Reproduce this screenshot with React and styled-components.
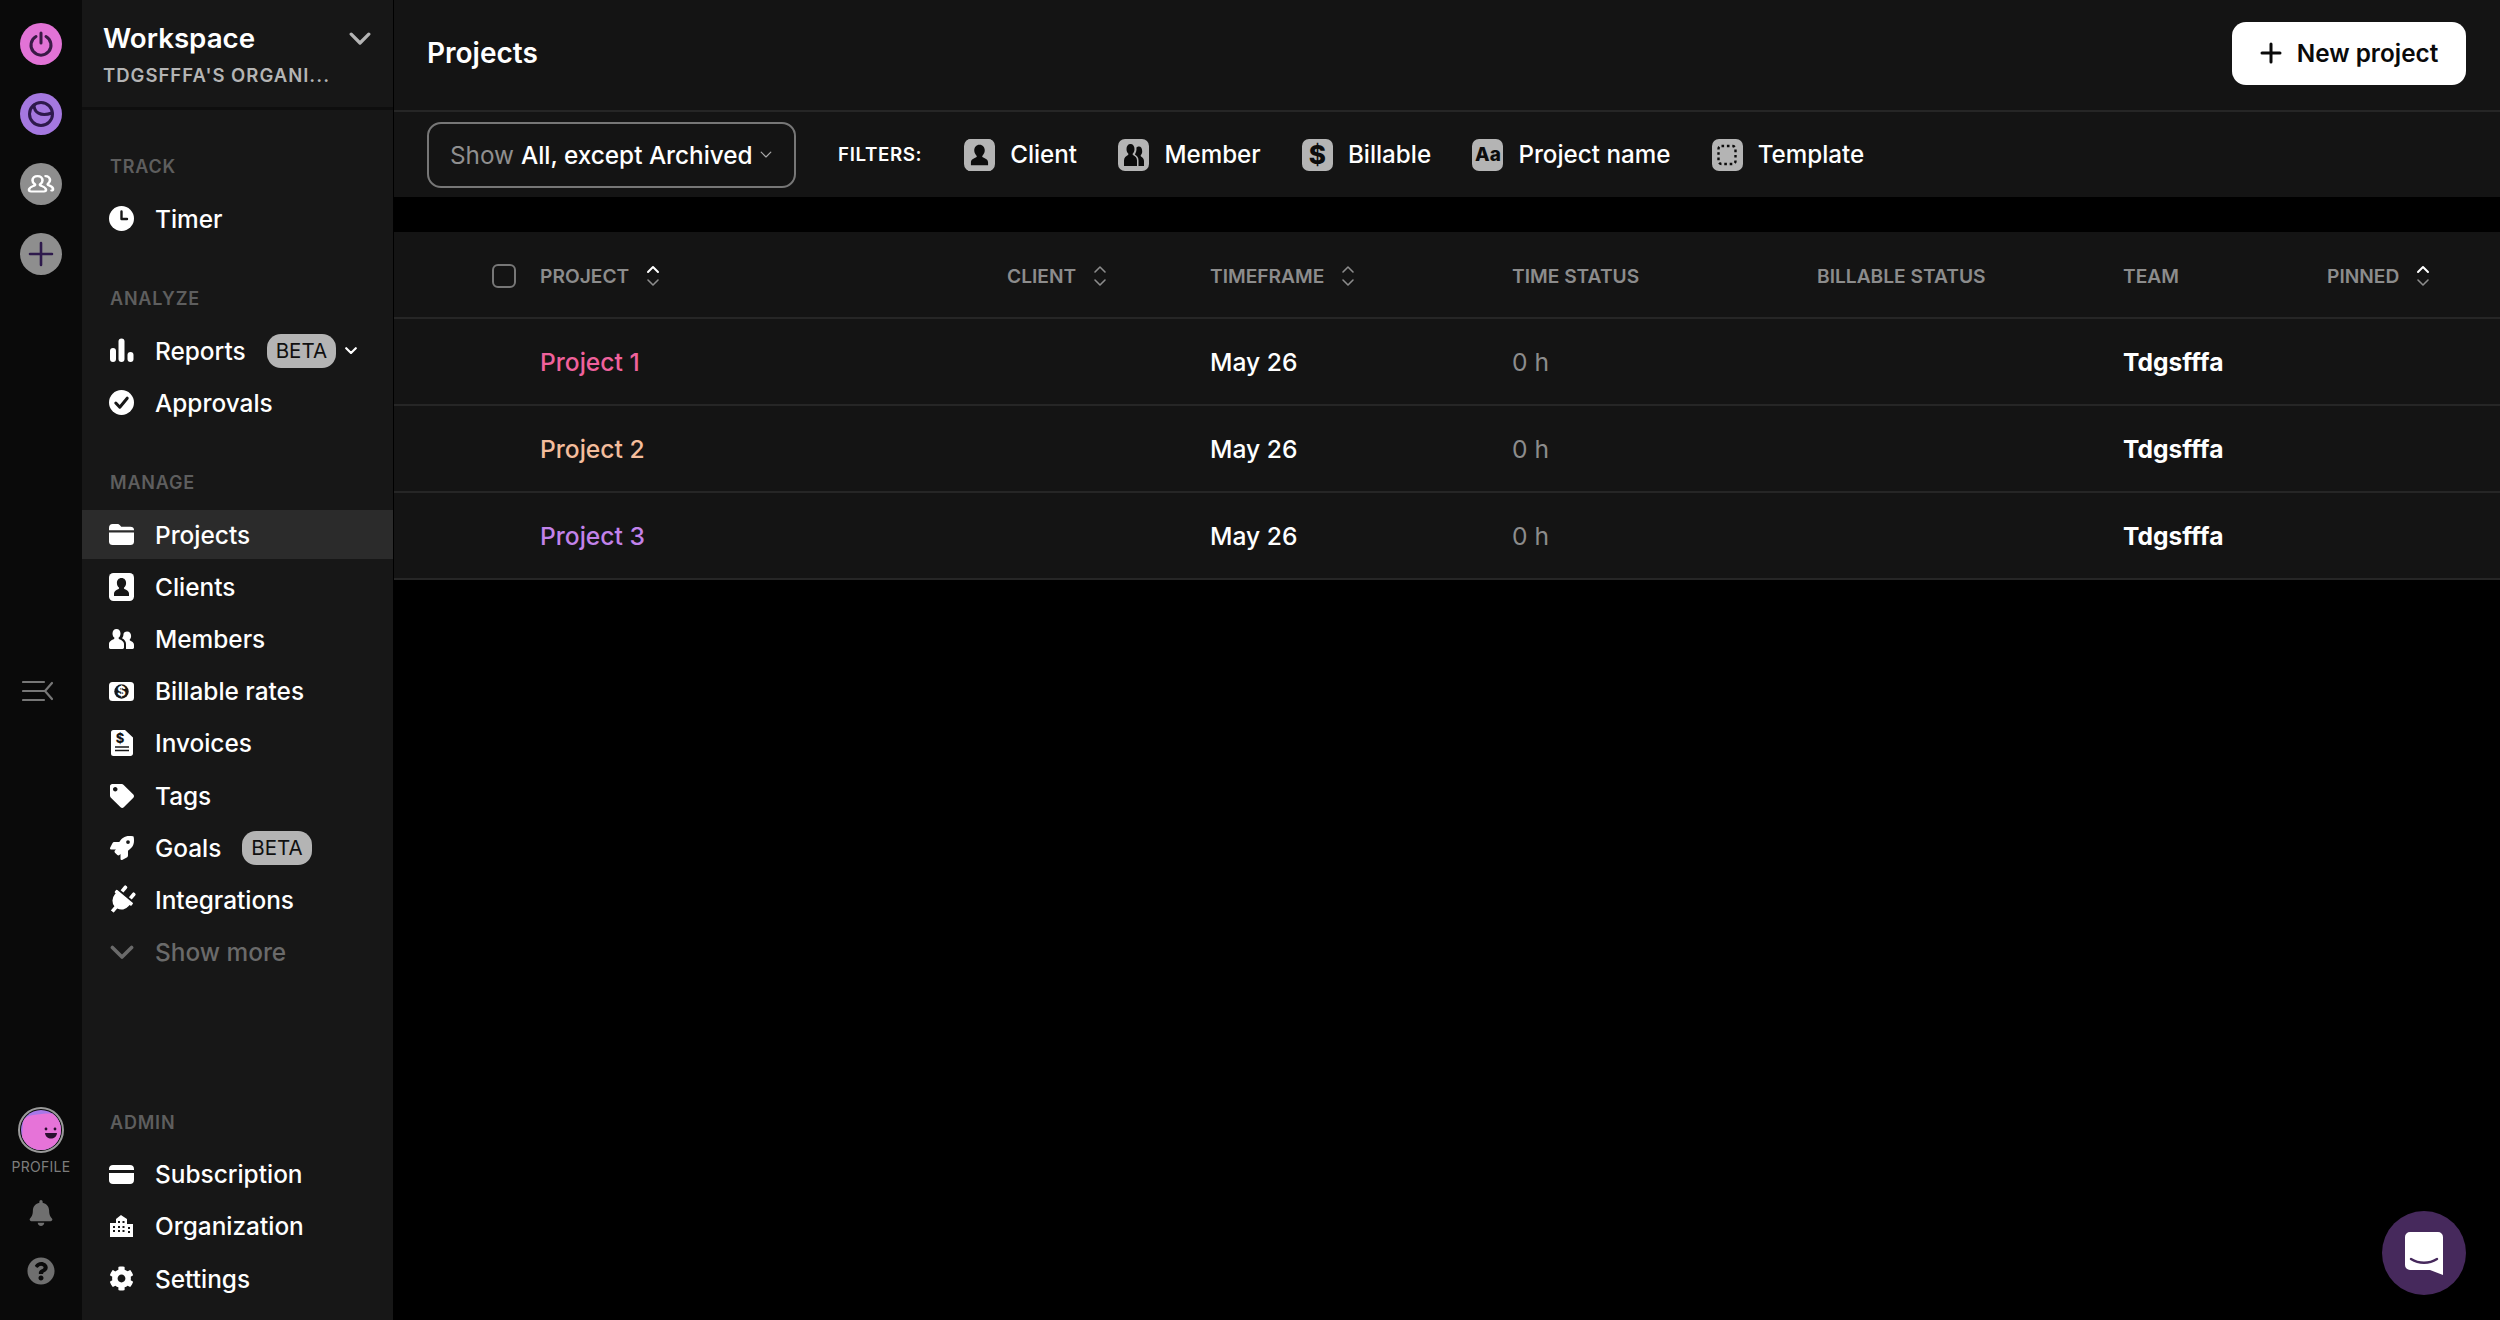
import styled, { createGlobalStyle } from 'styled-components';
import { FaBell, FaCog, FaPlug, FaQuestionCircle, FaRocket, FaTag } from 'react-icons/fa';

const GlobalStyle = createGlobalStyle`
  html, body {
    margin: 0;
    height: 100%;
    background: #000;
  }
  body, button {
    font-family: Inter, "Noto Sans", "Liberation Sans", sans-serif;
  }
  * {
    box-sizing: border-box;
  }
`;

const Clock = () => (
  <svg width="25" height="25" viewBox="0 0 25 25">
    <circle cx="12.5" cy="12.5" r="12.5" fill="currentColor" />
    <path d="M12.5 5.5v7.5h5.5" fill="none" stroke="#171717" strokeWidth="2.4" strokeLinecap="round" strokeLinejoin="round" />
  </svg>
);

const Bars = () => (
  <svg width="25" height="25" viewBox="0 0 25 25" fill="currentColor">
    <rect x="1" y="10" width="6" height="14" rx="3" />
    <rect x="9.5" y="0.5" width="6" height="23.5" rx="3" />
    <rect x="18.5" y="14" width="6" height="10" rx="3" />
  </svg>
);

const CheckCircle = () => (
  <svg width="25" height="25" viewBox="0 0 25 25">
    <circle cx="12.5" cy="12.5" r="12.5" fill="currentColor" />
    <path d="M6.8 13l4 4.2 7.4-9" fill="none" stroke="#171717" strokeWidth="3" strokeLinecap="round" strokeLinejoin="round" />
  </svg>
);

const Folder = () => (
  <svg width="25" height="21" viewBox="0 0 25 21" fill="currentColor">
    <path d="M0 4c0-2.4 1.4-4 3.6-4h4.6c1.6 0 2.2.6 3.2 1.8l.8 1h9.2c2.2 0 3.6 1 3.6 3v.4H0z" />
    <path d="M0 8.4h25v9c0 2.2-1.4 3.6-3.6 3.6H3.6C1.4 21 0 19.6 0 17.4z" />
  </svg>
);

const Portrait = ({ size = 25, height = 28, ink = '#171717' }) => (
  <svg width={size} height={height} viewBox="0 0 25 28">
    <rect width="25" height="28" rx="4.5" fill="currentColor" />
    <path d="M12.5 5c-2.9 0-4.6 2.2-4.6 4.9 0 2 .9 3.6 2 4.7.4.5.3 1-.3 1.4C7.3 17.2 5 18 5 20.5V23h15v-2.5c0-2.5-2.3-3.3-4.6-4.5-.6-.4-.7-.9-.3-1.4 1.1-1.1 2-2.7 2-4.7C17.1 7.2 15.4 5 12.5 5z" fill={ink} />
  </svg>
);

const People = () => (
  <svg width="25" height="20" viewBox="0 0 25 20" fill="currentColor">
    <path d="M7.5 0C5 0 3.5 2 3.5 4.4c0 1.8.8 3.3 1.7 4.2.4.5.3 1-.2 1.3C2.9 11 0 12.2 0 15v3.6c0 .8.6 1.4 1.4 1.4h12.2c.8 0 1.4-.6 1.4-1.4V15c0-2.8-2.9-4-5-5.1-.5-.3-.6-.8-.2-1.3.9-.9 1.7-2.4 1.7-4.2C11.5 2 10 0 7.5 0z" />
    <path d="M18 2.5c-1.500 0-2.900.8-3.500 2.200.1 2-.8 3.700-1.500 4.600 2.600 1.300 4 3.200 4 5.700V20h6.600c.8 0 1.400-.6 1.400-1.400v-2.800c0-2.300-2.400-3.300-4-4.200-.5-.3-.5-.7-.2-1.100.8-.8 1.300-2 1.300-3.500 0-2.500-1.500-4.500-4.100-4.500z" />
  </svg>
);

const Money = () => (
  <svg width="25" height="19" viewBox="0 0 25 19">
    <rect width="25" height="19" rx="3.5" fill="currentColor" />
    <circle cx="12.5" cy="9.5" r="7.2" fill="#171717" />
    <text x="12.5" y="14.2" fontSize="13" fontWeight="700" textAnchor="middle" fill="#fff" fontFamily="Inter, sans-serif">$</text>
  </svg>
);

const Invoice = () => (
  <svg width="22" height="26" viewBox="0 0 22 26">
    <path d="M2.5 0H14l8 7.5v16c0 1.4-1.1 2.5-2.5 2.5h-17A2.5 2.5 0 0 1 0 23.5v-21A2.5 2.5 0 0 1 2.5 0z" fill="currentColor" />
    <text x="9" y="13" fontSize="13" fontWeight="800" textAnchor="middle" fill="#171717" fontFamily="Inter, sans-serif">$</text>
    <path d="M4 17h14M4 20.5h14" stroke="#171717" strokeWidth="1.6" />
  </svg>
);

const Card = () => (
  <svg width="25" height="19" viewBox="0 0 25 19" fill="currentColor">
    <path d="M0 4c0-2.5 1.5-4 4-4h17c2.5 0 4 1.5 4 4v1H0z" />
    <path d="M0 8h25v7c0 2.5-1.5 4-4 4H4c-2.5 0-4-1.5-4-4z" />
  </svg>
);

const Building = () => (
  <svg width="23" height="22" viewBox="0 0 23 22">
    <path d="M0 8h6V4l5-4 1 .8L17 4v5h6v13H0z" fill="currentColor" />
    <path d="M3 11h2v2H3zM3 15h2v2H3zM8 6h2v2H8zM12.5 6h2v2h-2zM8 11h2v2H8zM12.5 11h2v2h-2zM8 15h2v2H8zM12.5 15h2v2h-2zM18 12h2v2h-2zM18 16h2v2h-2z" fill="#171717" />
  </svg>
);

const Chevron = ({ size = 20, stroke = 3 }) => (
  <svg width={size} height={size * 0.6} viewBox="0 0 20 12" fill="none" stroke="currentColor" strokeWidth={stroke} strokeLinecap="round" strokeLinejoin="round">
    <path d="M2 2l8 8 8-8" />
  </svg>
);

const Sort = ({ up }) => (
  <SortIcon viewBox="0 0 14 24" fill="none" strokeLinecap="round" strokeLinejoin="round">
    <path d="M2 8l5-5 5 5" stroke={up ? '#fff' : '#8c8c8c'} strokeWidth={up ? 2 : 1.6} />
    <path d="M2 16l5 5 5-5" stroke="#8c8c8c" strokeWidth="1.6" />
  </SortIcon>
);

const ClientFilter = () => (
  <FilterGlyph>
    <Portrait size={31} height={32} ink="#0c0c0c" />
  </FilterGlyph>
);

const MemberFilter = () => (
  <FilterGlyph>
    <svg width="22" height="24" viewBox="0 0 22 24" fill="#0c0c0c">
      <path d="M7.5 1C5 1 3.5 3 3.5 6c0 2 .7 3.5 1.7 4.6.4.5.3 1-.2 1.4C3 13.4 1 14.4 1 17.5V23h13v-5.500c0-3.100-2-4.100-4-5.500-.5-.4-.6-.9-.2-1.400 1-1.100 1.700-2.600 1.700-4.600C11.500 3 10 1 7.500 1z" />
      <path d="M16 3.500c-1 0-2 .4-2.600 1.100.4 2.400-.3 5-1.500 6.900 2.400 1.500 3.600 3.200 3.600 6V23H21v-5c0-2.500-1.500-3.500-3-4.600-.5-.4-.5-.8-.1-1.300.8-1 1.300-2.200 1.300-3.900 0-2.800-1.300-4.700-3.200-4.700z" />
    </svg>
  </FilterGlyph>
);

const BillableFilter = () => <FilterGlyph>$</FilterGlyph>;

const NameFilter = () => <FilterGlyph $small>Aa</FilterGlyph>;

const TemplateFilter = () => (
  <FilterGlyph>
    <svg width="22" height="24" viewBox="0 0 22 24" fill="none" stroke="#0c0c0c" strokeWidth="2.4" strokeDasharray="2.6 2.8">
      <rect x="2.5" y="3" width="17" height="18" rx="3" />
    </svg>
  </FilterGlyph>
);

const Plug = () => <TiltedPlug size={29} />;

const tracks = [{ label: 'Timer', icon: <Clock /> }];
const analyze = [
  { label: 'Reports', icon: <Bars />, beta: true, caret: true },
  { label: 'Approvals', icon: <CheckCircle /> },
];
const manage = [
  { label: 'Projects', icon: <Folder />, active: true },
  { label: 'Clients', icon: <Portrait /> },
  { label: 'Members', icon: <People /> },
  { label: 'Billable rates', icon: <Money /> },
  { label: 'Invoices', icon: <Invoice /> },
  { label: 'Tags', icon: <FaTag size={24} /> },
  { label: 'Goals', icon: <FaRocket size={24} />, beta: true },
  { label: 'Integrations', icon: <Plug /> },
  { label: 'Show more', icon: <Chevron size={24} />, muted: true },
];
const admin = [
  { label: 'Subscription', icon: <Card /> },
  { label: 'Organization', icon: <Building /> },
  { label: 'Settings', icon: <FaCog size={25} /> },
];

const filters = [
  { label: 'Client', icon: <ClientFilter /> },
  { label: 'Member', icon: <MemberFilter /> },
  { label: 'Billable', icon: <BillableFilter /> },
  { label: 'Project name', icon: <NameFilter /> },
  { label: 'Template', icon: <TemplateFilter /> },
];

const columns = [
  { label: 'Project', sort: 'up' },
  { label: 'Client', sort: 'both' },
  { label: 'Timeframe', sort: 'both' },
  { label: 'Time status' },
  { label: 'Billable status' },
  { label: 'Team' },
  { label: 'Pinned', sort: 'up' },
];

const projects = [
  { name: 'Project 1', color: '#f0619c' },
  { name: 'Project 2', color: '#f4bd9c' },
  { name: 'Project 3', color: '#c282ea' },
];

function NavList({ items }) {
  return (
    <NavItems>
      {items.map((item) => (
        <NavItem key={item.label} $active={item.active} $muted={item.muted}>
          <NavIcon>{item.icon}</NavIcon>
          <span>{item.label}</span>
          {item.beta && <Beta>BETA</Beta>}
          {item.caret && (
            <Caret>
              <Chevron size={12} stroke={3.6} />
            </Caret>
          )}
        </NavItem>
      ))}
    </NavItems>
  );
}

export default function App() {
  return (
    <>
      <GlobalStyle />
      <Page>
        <Rail>
          <RailGroup>
            <RailButton $bg="#e273d6">
              <svg width="26" height="26" viewBox="0 0 26 26" fill="none" stroke="#3a1a46" strokeWidth="3" strokeLinecap="round">
                <path d="M8 5.5a10 10 0 1 0 10 0" />
                <path d="M13 2v10" />
              </svg>
            </RailButton>
            <RailButton $bg="#a578e0">
              <svg width="28" height="28" viewBox="0 0 28 28" fill="none" stroke="#2e1a4c" strokeWidth="3" strokeLinecap="round">
                <circle cx="14" cy="14" r="11.5" />
                <path d="M7 5c0 7 6 12 18 8" />
              </svg>
            </RailButton>
            <RailButton $bg="#8e8e8e">
              <svg width="28" height="20" viewBox="0 0 28 24" preserveAspectRatio="none" fill="none" stroke="#fff" strokeWidth="2.6" strokeLinecap="round" strokeLinejoin="round">
                <path d="M10.5 2.5c-3 0-5 2-5 5 0 2 1 3.6 2.2 4.6.6.6.5 1.3-.2 1.7C4.8 15.3 2 16 2 19c0 1.3 1 2 2 2h13c1 0 2-.7 2-2 0-3-2.8-3.7-5.5-5.2-.7-.4-.8-1.1-.2-1.7 1.2-1 2.2-2.6 2.2-4.6 0-3-2-5-5-5z" />
                <path d="M18.5 2.5c2.5 0 4.5 2 4.5 4.8 0 2-1 3.5-2 4.5-.5.5-.4 1 .2 1.4 2 1.2 4.8 2 4.8 4.8 0 1-.6 1.8-1.5 1.8" />
              </svg>
            </RailButton>
            <RailButton $bg="#8e8e8e">
              <svg width="26" height="26" viewBox="0 0 26 26" stroke="#2e1a4c" strokeWidth="2.6" strokeLinecap="round">
                <path d="M13 2v22M2 13h22" />
              </svg>
            </RailButton>
          </RailGroup>
          <Collapse>
            <svg width="31" height="22" viewBox="0 0 31 22" fill="none" stroke="#777" strokeWidth="2.2" strokeLinecap="round" strokeLinejoin="round">
              <path d="M1 2h21M1 11h21M1 20h21M30 3l-7 8 7 8" />
            </svg>
          </Collapse>
          <RailBottom>
            <Profile>
              <Avatar>
                <svg width="40" height="40" viewBox="0 0 40 40">
                  <rect width="40" height="40" fill="#a678e8" />
                  <path d="M2 14c0-6 4-8 10-9 8-1 16-2 22-1 5 1 6 6 6 12v24H0z" fill="#e673d8" />
                  <circle cx="25" cy="19" r="1.4" fill="#2a1030" />
                  <circle cx="34" cy="19" r="1.4" fill="#2a1030" />
                  <path d="M24 23h12c-.5 4-3 5.5-6 5.5s-5.5-1.5-6-5.5z" fill="#2a1030" />
                </svg>
              </Avatar>
              <ProfileLabel>PROFILE</ProfileLabel>
            </Profile>
            <RailIcon>
              <FaBell size={26} />
            </RailIcon>
            <RailIcon>
              <FaQuestionCircle size={28} />
            </RailIcon>
          </RailBottom>
        </Rail>

        <Sidebar>
          <WorkspaceHeader>
            <WorkspaceText>
              <WorkspaceName>Workspace</WorkspaceName>
              <WorkspaceOrg>TDGSFFFA'S ORGANI...</WorkspaceOrg>
            </WorkspaceText>
            <WorkspaceCaret>
              <Chevron size={22} stroke={3} />
            </WorkspaceCaret>
          </WorkspaceHeader>
          <Nav>
            <Section>
              <SectionLabel>TRACK</SectionLabel>
              <NavList items={tracks} />
            </Section>
            <Section>
              <SectionLabel>ANALYZE</SectionLabel>
              <NavList items={analyze} />
            </Section>
            <Section>
              <SectionLabel>MANAGE</SectionLabel>
              <NavList items={manage} />
            </Section>
            <AdminSection>
              <SectionLabel>ADMIN</SectionLabel>
              <NavList items={admin} />
            </AdminSection>
          </Nav>
        </Sidebar>

        <Main>
          <TopBar>
            <Title>Projects</Title>
            <NewButton>
              <svg width="22" height="22" viewBox="0 0 22 22" stroke="#0a0a0a" strokeWidth="3" strokeLinecap="round">
                <path d="M11 2v18M2 11h18" />
              </svg>
              New project
            </NewButton>
          </TopBar>
          <FilterBar>
            <ShowSelect>
              <ShowLabel>Show</ShowLabel>
              <ShowValue>All, except Archived</ShowValue>
              <SelectCaret>
                <Chevron size={12} stroke={2} />
              </SelectCaret>
            </ShowSelect>
            <FiltersLabel>FILTERS:</FiltersLabel>
            {filters.map((filter) => (
              <Filter key={filter.label}>
                {filter.icon}
                {filter.label}
              </Filter>
            ))}
          </FilterBar>
          <Table>
            <HeadRow>
              <CheckCell>
                <Checkbox />
              </CheckCell>
              {columns.map((col) => (
                <HeadCell key={col.label}>
                  {col.label}
                  {col.sort && <Sort up={col.sort === 'up'} />}
                </HeadCell>
              ))}
            </HeadRow>
            {projects.map((project) => (
              <Row key={project.name}>
                <span />
                <ProjectName $color={project.color}>{project.name}</ProjectName>
                <span />
                <Strong>May 26</Strong>
                <Muted>0 h</Muted>
                <span />
                <Team>Tdgsfffa</Team>
                <span />
              </Row>
            ))}
          </Table>
        </Main>

        <ChatButton>
          <svg width="38" height="43" viewBox="0 0 38 43">
            <path d="M5 0h28a5 5 0 0 1 5 5v38l-13-5H5a5 5 0 0 1-5-5V5a5 5 0 0 1 5-5z" fill="#fff" />
            <path d="M6 27c8 5 18 5 26 0" fill="none" stroke="#46295c" strokeWidth="2.4" strokeLinecap="round" />
          </svg>
        </ChatButton>
      </Page>
    </>
  );
}

const Page = styled.div`
  position: relative;
  display: flex;
  height: 1320px;
  overflow: hidden;
  background: #000;
  color: #fff;
`;

const Rail = styled.aside`
  width: 82px;
  flex-shrink: 0;
  display: flex;
  flex-direction: column;
  align-items: center;
  justify-content: space-between;
  padding: 23px 0 35px;
  background: #0a0a0a;
`;

const RailGroup = styled.div`
  display: flex;
  flex-direction: column;
  gap: 28px;
`;

const RailButton = styled.div`
  width: 42px;
  height: 42px;
  display: flex;
  align-items: center;
  justify-content: center;
  border-radius: 50%;
  background: ${(p) => p.$bg};
`;

const Collapse = styled.div`
  display: flex;
  margin-left: -7px;
`;

const RailBottom = styled.div`
  display: flex;
  flex-direction: column;
  align-items: center;
  gap: 31px;
`;

const Profile = styled.div`
  display: flex;
  flex-direction: column;
  align-items: center;
  gap: 6px;
  margin-bottom: -6px;
`;

const Avatar = styled.div`
  width: 46px;
  height: 46px;
  padding: 1px;
  border: 2px solid #9a9a9a;
  border-radius: 50%;
  overflow: hidden;

  svg {
    display: block;
    border-radius: 50%;
  }
`;

const ProfileLabel = styled.div`
  font-size: 14px;
  line-height: 16px;
  letter-spacing: 0.3px;
  color: #7d7d7d;
`;

const RailIcon = styled.div`
  display: flex;
  color: #6f6f6f;
`;

const Sidebar = styled.aside`
  width: 311px;
  flex-shrink: 0;
  display: flex;
  flex-direction: column;
  background: #171717;
`;

const WorkspaceHeader = styled.div`
  height: 110px;
  flex-shrink: 0;
  display: flex;
  justify-content: space-between;
  padding: 21px 22px 0 21px;
  border-bottom: 3px solid #0e0e0e;
`;

const WorkspaceText = styled.div`
  display: flex;
  flex-direction: column;
  gap: 9px;
`;

const WorkspaceName = styled.div`
  font-size: 27.7px;
  line-height: 34px;
  font-weight: 600;
`;

const WorkspaceOrg = styled.div`
  font-size: 18.5px;
  line-height: 22px;
  font-weight: 600;
  letter-spacing: 1px;
  color: #b4b4b4;
`;

const WorkspaceCaret = styled.div`
  margin-top: 8px;
  color: #b4b4b4;
`;

const Nav = styled.nav`
  flex: 1;
  display: flex;
  flex-direction: column;
  gap: 44px;
  padding: 45px 0 17px;
`;

const Section = styled.section`
  display: flex;
  flex-direction: column;
  gap: 15px;
`;

const AdminSection = styled(Section)`
  margin-top: auto;
`;

const SectionLabel = styled.div`
  padding-left: 28px;
  font-size: 18px;
  line-height: 24px;
  font-weight: 600;
  letter-spacing: 0.8px;
  color: #5e5e5e;
`;

const NavItems = styled.div`
  display: flex;
  flex-direction: column;
  gap: 3.2px;
`;

const NavItem = styled.div`
  height: 49px;
  display: flex;
  align-items: center;
  padding-left: 27px;
  font-size: 24.4px;
  font-weight: 500;
  color: ${(p) => (p.$muted ? '#6a6a6a' : '#fff')};
  background: ${(p) => (p.$active ? '#2b2b2b' : 'transparent')};
`;

const NavIcon = styled.span`
  width: 25px;
  margin-right: 21px;
  display: flex;
  justify-content: center;
  color: currentColor;
`;

const Beta = styled.span`
  height: 34px;
  margin-left: 21px;
  padding: 0 9px;
  display: flex;
  align-items: center;
  border-radius: 14px;
  background: #b4b4b4;
  font-size: 20.5px;
  font-weight: 400;
  color: #101010;
`;

const Caret = styled.span`
  margin-left: 9px;
  display: flex;
`;

const TiltedPlug = styled(FaPlug)`
  flex-shrink: 0;
  transform: rotate(40deg);
`;

const Main = styled.main`
  flex: 1;
  margin-left: 1px;
  min-width: 0;
`;

const TopBar = styled.header`
  height: 112px;
  display: flex;
  align-items: center;
  justify-content: space-between;
  padding: 0 34px 4px 33px;
  background: #141414;
  border-bottom: 2px solid #262626;
`;

const Title = styled.h1`
  margin: 0;
  font-size: 28px;
  font-weight: 600;
`;

const NewButton = styled.button`
  width: 234px;
  height: 63px;
  display: flex;
  align-items: center;
  justify-content: center;
  gap: 15px;
  border: 0;
  border-radius: 14px;
  background: #fff;
  font-size: 24.3px;
  font-weight: 600;
  color: #0a0a0a;
`;

const FilterBar = styled.div`
  height: 85px;
  display: flex;
  align-items: center;
  padding: 0 33px;
  background: #141414;
`;

const ShowSelect = styled.div`
  width: 369px;
  height: 66px;
  display: flex;
  align-items: center;
  padding: 0 21px;
  border: 2px solid #777;
  border-radius: 14px;
  font-size: 24.3px;
  font-weight: 500;
  white-space: nowrap;
`;

const ShowLabel = styled.span`
  margin-right: 7px;
  font-weight: 400;
  color: #8f8f8f;
`;

const ShowValue = styled.span`
  color: #fff;
`;

const SelectCaret = styled.span`
  margin-left: 7px;
  display: flex;
  color: #aaa;
`;

const FiltersLabel = styled.span`
  margin: 0 42px 0 42px;
  font-size: 18.8px;
  font-weight: 600;
  letter-spacing: 0.6px;
`;

const Filter = styled.span`
  margin-right: 41.3px;
  display: flex;
  align-items: center;
  gap: 15px;
  font-size: 24.2px;
  font-weight: 500;
  color: #fff;
`;

const FilterGlyph = styled.span`
  width: 31px;
  height: 32px;
  display: flex;
  align-items: center;
  justify-content: center;
  border-radius: 7px;
  background: #b4b4b4;
  font-size: ${(p) => (p.$small ? '19px' : '26px')};
  font-weight: 800;
  color: #0c0c0c;

  svg {
    color: #b4b4b4;
  }
`;

const Table = styled.div`
  margin-top: 35px;
`;

const tableGrid = `
  display: grid;
  grid-template-columns: 146px 467px 203px 302px 305px 306px 204px 1fr;
  align-items: center;
  background: #141414;
  border-bottom: 2px solid #262626;
`;

const HeadRow = styled.div`
  ${tableGrid}
  height: 87px;
  padding-top: 2px;
`;

const Row = styled.div`
  ${tableGrid}
  height: 87px;
`;

const CheckCell = styled.div`
  display: flex;
  justify-content: flex-end;
  padding-right: 24px;
`;

const Checkbox = styled.span`
  width: 24px;
  height: 24px;
  border: 2px solid #777;
  border-radius: 6px;
`;

const HeadCell = styled.div`
  display: flex;
  align-items: center;
  gap: 17px;
  font-size: 19.2px;
  font-weight: 600;
  color: #8c8c8c;
  text-transform: uppercase;
`;

const SortIcon = styled.svg`
  width: 14px;
  height: 24px;
`;

const ProjectName = styled.div`
  font-size: 24.6px;
  font-weight: 500;
  color: ${(p) => p.$color};
`;

const Strong = styled.div`
  font-size: 24.6px;
  font-weight: 500;
`;

const Muted = styled.div`
  font-size: 24.6px;
  color: #8c8c8c;
`;

const Team = styled.div`
  font-size: 24.6px;
  font-weight: 700;
`;

const ChatButton = styled.div`
  position: absolute;
  right: 34px;
  bottom: 25px;
  width: 84px;
  height: 84px;
  display: flex;
  align-items: center;
  justify-content: center;
  border-radius: 50%;
  background: #46295c;
`;
